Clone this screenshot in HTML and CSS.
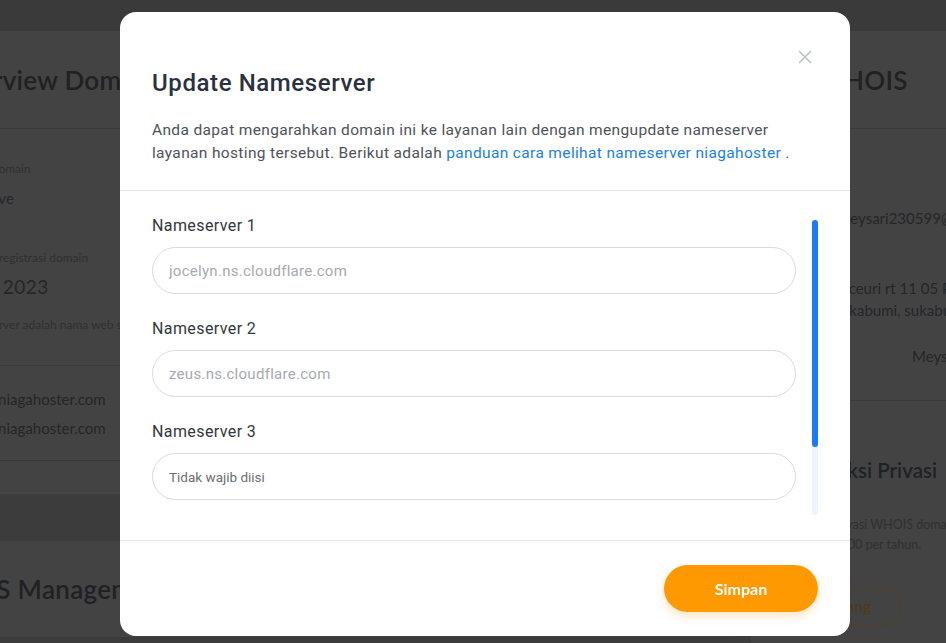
FILE: index.html
```html
<!DOCTYPE html>
<html lang="id">
<head>
<meta charset="utf-8">
<title>Update Nameserver</title>
<link rel="stylesheet" href="styles.css">
</head>
<body>
<div class="page">
  <div class="topbar"></div>
  <div class="main">
    <div class="col-left">
      <section class="card">
        <div class="card-head"><h1 class="card-title card-title-ov">Overview Domain</h1></div>
        <div class="card-body">
          <div class="lbl">Status domain</div>
          <div class="val val-status">Active</div>
          <div class="lbl lbl-gap">Tanggal registrasi domain</div>
          <div class="val val-big">Mei 2023</div>
          <div class="note">Nameserver adalah nama web server yang digunakan</div>
          <div class="sep"></div>
          <div class="val ns">ns1.niagahoster.com</div>
          <div class="val ns ns2">ns2.niagahoster.com</div>
          <div class="sep sep-end"></div>
        </div>
      </section>
      <section class="card card-dns">
        <div class="card-head card-head-last"><h1 class="card-title">DNS Management</h1></div>
      </section>
    </div>
    <div class="col-right">
      <section class="card card-whois">
        <div class="card-head card-head-whois"><h1 class="card-title">Data WHOIS</h1></div>
        <div class="whois-body">
          <div class="wval w-email">meysari230599@gmail.com</div>
          <div class="wval w-addr1">Cicareuceuri rt 11 05 Pasir</div>
          <div class="wval w-addr2">Sukabumi, sukabumi</div>
          <div class="wval w-name">Meysari</div>
          <div class="sep w-sep"></div>
          <h2 class="w-title">Proteksi Privasi</h2>
          <div class="w-desc w-desc1">Aktifkan privasi WHOIS domain Anda</div>
          <div class="w-desc w-desc2">Hanya Rp 25.000 per tahun.</div>
          <div class="w-btn">Pasang</div>
        </div>
      </section>
    </div>
  </div>
</div>

<div class="overlay">
  <div class="modal" role="dialog" aria-labelledby="modal-title">
    <button class="modal-close" type="button" aria-label="Tutup">
      <svg width="14" height="14" viewBox="0 0 14 14"><path d="M1.5 1.5 L12.5 12.5 M12.5 1.5 L1.5 12.5" stroke="#bcc0c7" stroke-width="1.6" stroke-linecap="round" fill="none"/></svg>
    </button>
    <div class="modal-header">
      <h2 id="modal-title" class="modal-title">Update Nameserver</h2>
      <p class="modal-desc">Anda dapat mengarahkan domain ini ke layanan lain dengan mengupdate nameserver layanan hosting tersebut. Berikut adalah <a href="#" class="modal-link">panduan cara melihat nameserver niagahoster</a> .</p>
    </div>
    <div class="modal-body">
      <div class="fields">
        <div class="field">
          <label class="field-label" for="ns1">Nameserver 1</label>
          <input class="field-input" id="ns1" type="text" placeholder="jocelyn.ns.cloudflare.com">
        </div>
        <div class="field">
          <label class="field-label" for="ns2">Nameserver 2</label>
          <input class="field-input" id="ns2" type="text" placeholder="zeus.ns.cloudflare.com">
        </div>
        <div class="field">
          <label class="field-label" for="ns3">Nameserver 3</label>
          <input class="field-input field-input-opt" id="ns3" type="text" placeholder="Tidak wajib diisi">
        </div>
      </div>
      <div class="rail"><div class="rail-thumb"></div></div>
    </div>
    <div class="modal-footer">
      <button class="btn-save" type="button">Simpan</button>
    </div>
  </div>
</div>
</body>
</html>
```

FILE: styles.css
```css
* { box-sizing: border-box; }
html, body { margin: 0; height: 100%; }
body {
  background: #3c3c3c;
  overflow: hidden;
  font-family: "Lato", "Open Sans", sans-serif;
}

/* ---------- dimmed page behind the dialog ---------- */
.page { width: 1100px; margin-left: -68px; }
.topbar { height: 31px; background: #3a3a3a; }
.main { display: flex; gap: 20px; }
.col-left { width: 799px; }
.col-right { flex: 1; }

.card { background: #434343; }
.card-head {
  height: 98px;
  padding: 0 24px;
  display: flex;
  align-items: center;
  border-bottom: 1px solid #3a3a3a;
}
.card-head-whois { padding-left: 3px; }
.card-title {
  margin: 0;
  font-family: "Lato", sans-serif;
  font-weight: 600;
  font-size: 26px;
  color: #1f2124;
  letter-spacing: 0.3px;
  white-space: nowrap;
}
.card-title-ov { margin-left: -12px; }
.card-body { padding: 32px 24px 33px; }
.lbl { font-size: 12px; line-height: 16px; color: #2f3033; white-space: nowrap; }
.lbl-gap { margin-top: 42px; }
.val { margin-top: 11px; font-size: 15px; line-height: 20px; color: #25262a; white-space: nowrap; }
.val-status { margin-left: 16px; }
.val-big { margin-top: 9px; margin-left: 8px; font-size: 19px; line-height: 24px; letter-spacing: 0.5px; }
.note { margin-top: 18px; font-size: 12px; line-height: 16px; color: #2f3033; white-space: nowrap; }
.sep { height: 1px; background: #3a3a3a; margin: 32px -24px 0; }
.ns { margin-top: 23px; margin-left: 15px; }
.ns2 { margin-top: 9px; }
.sep-end { margin-top: 22px; }

.card-dns { margin-top: 47px; }
.card-head-last { height: 97px; border-bottom: 1px solid #3a3a3a; }

.card-whois { height: 700px; }
.whois-body { padding: 79px 0 0; }
.wval { font-size: 15px; line-height: 20px; color: #25262a; white-space: nowrap; }
.w-email { margin-left: 87px; }
.w-addr1 { margin-top: 50px; margin-left: 48px; }
.w-addr2 { margin-top: 2px; margin-left: 82px; }
.w-name { margin-top: 26px; margin-left: 161px; }
.w-sep { margin: 34px 0 0; }
.w-title {
  margin: 55px 0 0 47px;
  font-size: 20.5px;
  line-height: 28px;
  font-weight: 600;
  color: #1f2124;
  white-space: nowrap;
}
.w-desc { font-size: 12.5px; line-height: 20px; color: #2f3033; white-space: nowrap; }
.w-desc1 { margin: 31px 0 0 31px; }
.w-desc2 { margin-left: 16px; }
.w-btn {
  margin-top: 31px;
  width: 150px;
  height: 40px;
  border: 1.5px solid #4f4126;
  border-radius: 20px;
  display: flex;
  align-items: center;
  justify-content: flex-end;
  padding-right: 29px;
  font-weight: 700;
  font-size: 15px;
  color: #4d3c1e;
}

/* ---------- dialog ---------- */
.overlay {
  position: fixed;
  inset: 0;
  display: flex;
  justify-content: center;
  align-items: flex-start;
  padding: 12px 0 0 24px;
}
.modal {
  position: relative;
  width: 730px;
  background: #ffffff;
  border-radius: 16px;
  display: flex;
  flex-direction: column;
  font-family: "Roboto", "Liberation Sans", sans-serif;
}
.modal-close {
  position: absolute;
  top: 38px;
  left: 678px;
  width: 14px;
  height: 14px;
  padding: 0;
  border: 0;
  background: none;
  display: flex;
}
.modal-header {
  padding: 56px 32px 25px;
  border-bottom: 1px solid #e7e7e7;
}
.modal-title {
  margin: 0;
  font-size: 24px;
  line-height: 30px;
  font-weight: 500;
  letter-spacing: 0.6px;
  color: #2a3140;
}
.modal-desc {
  margin: 21px 0 0;
  font-size: 15.5px;
  line-height: 23px;
  letter-spacing: 0.35px;
  color: #4e535b;
}
.modal-link { color: #1c7fe0; text-decoration: none; }

.modal-body {
  height: 349px;
  padding: 0 32px;
  display: flex;
  gap: 16px;
}
.fields { flex: 1; padding-top: 25px; }
.field + .field { margin-top: 25px; }
.field-label {
  display: block;
  font-size: 16px;
  line-height: 20px;
  letter-spacing: 0.4px;
  color: #33373d;
}
.field-input {
  display: block;
  width: 100%;
  height: 47px;
  margin-top: 11px;
  padding: 0 16px;
  border: 1px solid #dadada;
  border-radius: 24px;
  font-family: "Roboto", "Liberation Sans", sans-serif;
  font-size: 15px;
  letter-spacing: 0.28px;
  color: #333;
  background: #fff;
  outline: none;
}
.field-input::placeholder { color: #a6aab1; }
.field-input-opt { font-size: 13.5px; letter-spacing: 0; }
.field-input-opt::placeholder { color: #6b6e72; }

.rail {
  width: 6px;
  height: 295px;
  margin-top: 29px;
  background: #eff4fb;
  border-radius: 3px;
}
.rail-thumb {
  height: 227px;
  background: #1a7bf4;
  border-radius: 3px;
}

.modal-footer {
  border-top: 1px solid #e7e7e7;
  padding: 24px 32px 24px;
  display: flex;
  justify-content: flex-end;
}
.btn-save {
  width: 154px;
  height: 47px;
  border: 0;
  border-radius: 24px;
  background: #ff9902;
  color: #ffffff;
  font-family: "Lato", sans-serif;
  font-weight: 700;
  font-size: 16px;
  box-shadow: 0 4px 10px rgba(255, 153, 2, 0.25);
}
```
